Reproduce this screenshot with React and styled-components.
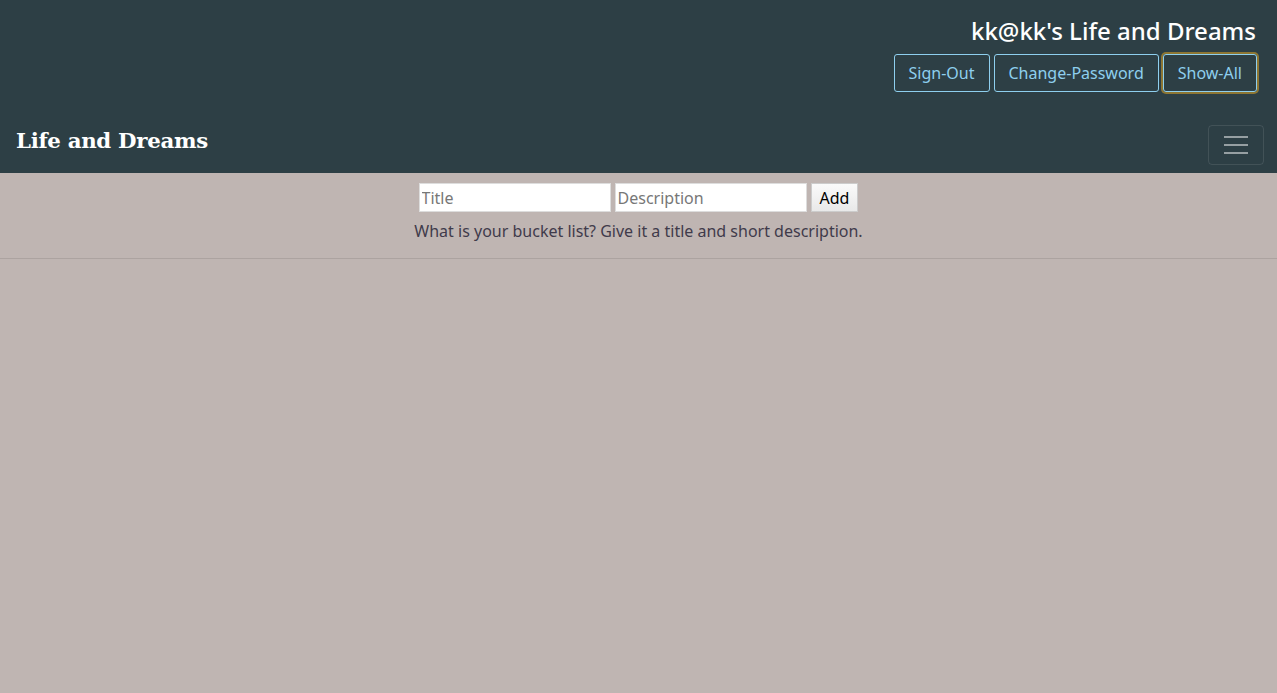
import React from "react";
import styled, { createGlobalStyle } from "styled-components";

const GlobalStyle = createGlobalStyle`
  html, body {
    margin: 0;
    height: 100%;
    background: #bfb5b2;
    font-family: "Noto Sans", "Open Sans", sans-serif;
  }
  #root { min-height: 100%; }
`;

const Page = styled.div`
  min-height: 693px;
  background: #bfb5b2;
`;

const Header = styled.header`
  background: #2d3f45;
  padding: 14px 21px 0 16px;
`;

const TopBar = styled.div`
  display: flex;
  flex-direction: column;
  align-items: flex-end;
`;

const UserTitle = styled.h2`
  margin: 0;
  font-size: 24px;
  font-weight: 500;
  color: #fff;
  line-height: 34px;
`;

const ButtonRow = styled.div`
  display: flex;
  gap: 4px;
  margin-top: 6px;
  margin-right: -1px;
`;

const NavButton = styled.button`
  height: 38px;
  padding: 0 14px;
  background: transparent;
  color: #8ecfee;
  border: 1px solid #8ecfee;
  border-radius: 3px;
  font-family: inherit;
  font-size: 16px;
  cursor: pointer;
  box-shadow: ${(p) =>
    p.$focused ? "inset 0 0 0 1px #2d3f45, 0 0 0 2px #8d7633" : "none"};
`;

const NavBar = styled.nav`
  display: flex;
  justify-content: space-between;
  align-items: center;
  height: 81px;
  margin-right: -8px;
`;

const Brand = styled.h1`
  margin: 0;
  font-family: "DejaVu Serif", "Liberation Serif", serif;
  font-size: 21.3px;
  font-weight: bold;
  color: #fff;
  letter-spacing: -0.3px;
  padding-top: 15px;
`;

const Toggler = styled.button`
  width: 56px;
  height: 40px;
  margin-top: 25px;
  background: transparent;
  border: 1px solid rgba(255, 255, 255, 0.1);
  border-radius: 4px;
  display: flex;
  flex-direction: column;
  justify-content: center;
  align-items: center;
  gap: 6px;
  padding: 0;
`;

const TogglerBar = styled.span`
  display: block;
  width: 24px;
  height: 2px;
  background: rgba(255, 255, 255, 0.5);
`;

const FormSection = styled.section`
  display: flex;
  flex-direction: column;
  align-items: center;
  padding-top: 10px;
  padding-bottom: 16px;
  border-bottom: 1px solid #aca3a0;
`;

const Form = styled.form`
  display: flex;
  gap: 4px;
  align-items: center;
`;

const Input = styled.input`
  width: 192px;
  height: 29px;
  box-sizing: border-box;
  border: 1px solid #ddd;
  padding: 0 2px;
  font-family: inherit;
  font-size: 16px;
  background: #fff;
  &::placeholder { color: #777; }
`;

const AddButton = styled.button`
  height: 29px;
  padding: 0 8px;
  border: 1px solid #ccc;
  background: linear-gradient(#fafafa, #e9e9e9);
  font-family: inherit;
  font-size: 16px;
  color: #000;
`;

const Hint = styled.p`
  margin: 8px 0 0;
  font-size: 16px;
  color: #3f3b4b;
`;

export default function App() {
  return (
    <Page>
      <GlobalStyle />
      <Header>
        <TopBar>
          <UserTitle>kk@kk's Life and Dreams</UserTitle>
          <ButtonRow>
            <NavButton>Sign-Out</NavButton>
            <NavButton>Change-Password</NavButton>
            <NavButton $focused>Show-All</NavButton>
          </ButtonRow>
        </TopBar>
        <NavBar>
          <Brand>Life and Dreams</Brand>
          <Toggler aria-label="menu">
            <TogglerBar />
            <TogglerBar />
            <TogglerBar />
          </Toggler>
        </NavBar>
      </Header>
      <FormSection>
        <Form onSubmit={(e) => e.preventDefault()}>
          <Input placeholder="Title" />
          <Input placeholder="Description" />
          <AddButton type="submit">Add</AddButton>
        </Form>
        <Hint>What is your bucket list? Give it a title and short description.</Hint>
      </FormSection>
    </Page>
  );
}
